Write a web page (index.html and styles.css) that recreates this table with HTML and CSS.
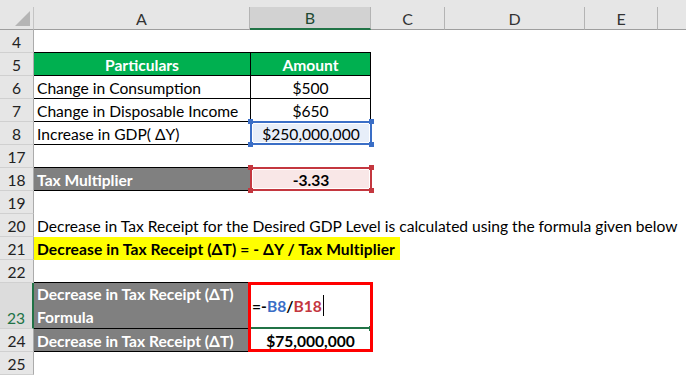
FILE: index.html
```html
<!DOCTYPE html>
<html>
<head>
<meta charset="utf-8">
<link rel="stylesheet" href="styles.css">
</head>
<body>
<div class="sheet">
  <div class="row hdr">
    <div class="corner"><svg width="33" height="22" viewBox="0 0 33 22"><polygon points="30,4 30,19 15,19" fill="#b5b5b5"/></svg></div>
    <div class="ch">A</div>
    <div class="ch active">B</div>
    <div class="ch">C</div>
    <div class="ch">D</div>
    <div class="ch">E</div>
    <div class="ch last"></div>
  </div>
  <div class="row"><div class="rh">4</div><div class="c bb"></div><div class="c bb"></div></div>
  <div class="row"><div class="rh">5</div><div class="c bb green ctr">Particulars</div><div class="c bb bl br green ctr">Amount</div></div>
  <div class="row"><div class="rh">6</div><div class="c bb">Change in Consumption</div><div class="c bb bl br ctr">$500</div></div>
  <div class="row"><div class="rh">7</div><div class="c bb">Change in Disposable Income</div><div class="c bb bl br ctr">$650</div></div>
  <div class="row"><div class="rh">8</div><div class="c bb">Increase in GDP( ΔY)</div><div class="c selcell"><div class="sel blue">$250,000,000<i class="hd tl"></i><i class="hd tr"></i><i class="hd lb"></i><i class="hd rb"></i></div></div></div>
  <div class="row"><div class="rh">17</div><div class="c bb"></div></div>
  <div class="row"><div class="rh">18</div><div class="c bb grey">Tax Multiplier</div><div class="c selcell"><div class="sel red">-3.33<i class="hd tl"></i><i class="hd tr"></i><i class="hd lb"></i><i class="hd rb"></i></div></div></div>
  <div class="row"><div class="rh">19</div></div>
  <div class="row"><div class="rh">20</div><div class="c span">Decrease in Tax Receipt for the Desired GDP Level is calculated using the formula given below</div></div>
  <div class="row"><div class="rh">21</div><div class="c span flush"><span class="hl">Decrease in Tax Receipt (ΔT) = - ΔY / Tax Multiplier</span></div></div>
  <div class="row"><div class="rh">22</div><div class="c bb"></div></div>
  <div class="row tall"><div class="rh act">23</div><div class="c bb grey two">Decrease in Tax Receipt (ΔT)<br>Formula</div><div class="c formula"><span class="k">=-</span><span class="ref-b">B8</span><span class="k">/</span><span class="ref-r">B18</span><span class="caret"></span><i class="gh"></i><div class="redbox"></div></div></div>
  <div class="row"><div class="rh">24</div><div class="c bb grey">Decrease in Tax Receipt (ΔT)</div><div class="c ctr strong">$75,000,000</div></div>
  <div class="row"><div class="rh">25</div></div>
</div>
</body>
</html>
```
FILE: styles.css
```css
* { box-sizing: border-box; margin: 0; padding: 0; }
body { margin: 0; background: #fff; font-family: Lato, "Open Sans", sans-serif; font-size: 15.6px; color: #000; }
.sheet { width: 686px; height: 375px; overflow: hidden; position: relative; }
.row { display: grid; grid-template-columns: 34px 216px 121px 74px 140px 73px 28px; height: 23px; }
.row.tall { height: 46px; }
.hdr { height: 30px; padding-top: 7px; background: #e6e6e6; }
.corner { border-right: 1px solid #c4c4c4; border-bottom: 1px solid #9e9e9e; }
.corner svg { display: block; }
.ch { border-right: 1px solid #b4b4b4; border-bottom: 1px solid #9e9e9e; display: flex; align-items: center; justify-content: center; font-size: 16px; color: #333; }
.ch.last { border-right: none; }
.ch.active { background: #d2d2d2; border-bottom: 2px solid #217346; color: #1f4a33; }
.rh { background: #e6e6e6; border-right: 1px solid #ababab; border-bottom: 1px solid #d0d0d0; display: flex; align-items: center; justify-content: center; font-size: 15.6px; color: #222; padding-top: 1px; }
.rh.act { background: #dcdcdc; border-right: 2px solid #217346; color: #217346; align-items: flex-end; padding-bottom: 1px; }
.c { display: flex; align-items: center; padding: 1px 3px 0; white-space: nowrap; }
.bb { border-bottom: 1px solid #000; }
.bl { border-left: 1px solid #000; }
.br { border-right: 1px solid #000; }
.ctr { justify-content: center; }
.green { background: #00b050; color: #fff; font-weight: 700; }
.grey { background: #808080; color: #fff; font-weight: 700; }
.strong { font-weight: 700; }
.span { grid-column: 2 / -1; overflow: visible; }
.flush { padding: 0; }
.hl { background: #ffff00; font-weight: 700; letter-spacing: 0.1px; height: 23px; display: flex; align-items: center; padding: 1px 5px 0 3px; }
.two { display: block; line-height: 22.5px; padding-top: 0; }
.selcell { position: relative; padding: 0; }
.sel { position: absolute; top: -1px; left: 0; right: -1px; bottom: 0; border: 2px solid; display: flex; align-items: center; justify-content: center; box-shadow: inset 0 0 0 1px #fff; padding-top: 1px; }
.sel.blue { border-color: #3a6ec6; background: #e7eef9; }
.sel.red { border-color: #c4373f; background: #f9e7e7; font-weight: 700; }
.hd { position: absolute; width: 5px; height: 5px; }
.blue .hd { background: #3a6ec6; }
.red .hd { background: #c4373f; }
.tl { top: -4px; left: -4px; }
.tr { top: -4px; right: -4px; }
.lb { bottom: -4px; left: -4px; }
.rb { bottom: -4px; right: -4px; }
.formula { position: relative; font-weight: 700; border-bottom: 2px solid #217346; padding-left: 2px; }
.ref-b { color: #3a6ec6; }
.ref-r { color: #c4373f; }
.caret { display: inline-block; width: 1px; height: 21px; background: #000; margin-left: 1px; }
.gh { position: absolute; right: -2px; bottom: -4px; width: 4px; height: 5px; background: #217346; }
.redbox { position: absolute; left: -2px; top: -1px; width: 125px; height: 70px; border: 3px solid #ff0000; z-index: 2; }
```
